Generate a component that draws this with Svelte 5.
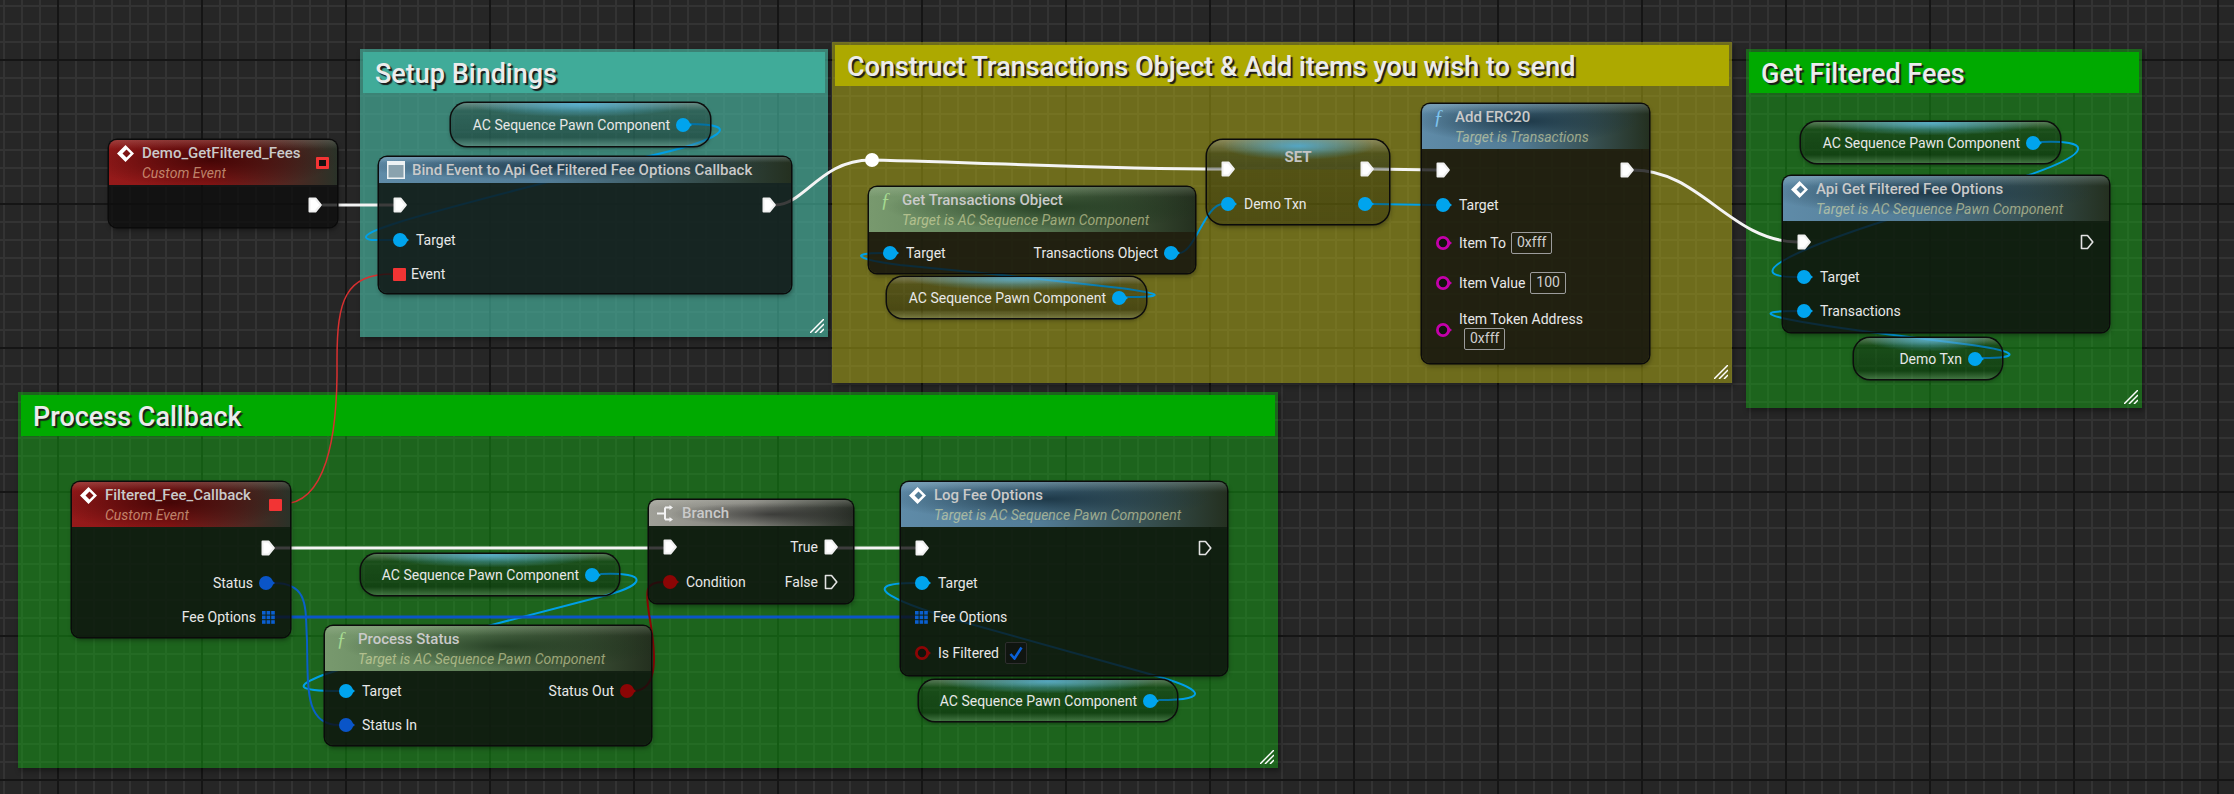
<script>
  const AC = 'AC Sequence Pawn Component';
  const TARGET_AC = 'Target is AC Sequence Pawn Component';

  const comments = [
    { x: 360, y: 49, w: 468, h: 288, tone: 'teal', title: 'Setup Bindings' },
    { x: 832, y: 42, w: 900, h: 341, tone: 'olive', title: 'Construct Transactions Object & Add items you wish to send' },
    { x: 1746, y: 49, w: 396, h: 359, tone: 'green', title: 'Get Filtered Fees' },
    { x: 18, y: 392, w: 1260, h: 376, tone: 'green', title: 'Process Callback' }
  ];

  const pills = [
    { x: 451, y: 103, w: 259, h: 43, label: AC },
    { x: 887, y: 277, w: 259, h: 41, label: AC },
    { x: 1801, y: 122, w: 259, h: 41, label: AC },
    { x: 1854, y: 338, w: 148, h: 41, label: 'Demo Txn' },
    { x: 361, y: 554, w: 258, h: 41, label: AC },
    { x: 919, y: 680, w: 258, h: 41, label: AC }
  ];

  // rows carry the y centre of the row on the canvas, see rowHeights()
  const nodes = [
    {
      x: 109, y: 140, w: 228, h: 87, hh: 45, tone: 'red', icon: 'diamond',
      title: 'Demo_GetFiltered_Fees', sub: 'Custom Event', tail: 'hollow',
      rows: [{ cy: 205, right: { pin: 'exec' } }]
    },
    {
      x: 379, y: 157, w: 412, h: 136, hh: 26, tone: 'blue', icon: 'bind',
      title: 'Bind Event to Api Get Filtered Fee Options Callback',
      rows: [
        { cy: 205, left: { pin: 'exec' }, right: { pin: 'exec' } },
        { cy: 240, left: { pin: 'obj', label: 'Target' } },
        { cy: 274, left: { pin: 'square', label: 'Event' } }
      ]
    },
    {
      x: 869, y: 187, w: 326, h: 86, hh: 45, tone: 'moss', icon: 'fn',
      title: 'Get Transactions Object', sub: TARGET_AC,
      rows: [{ cy: 253, left: { pin: 'obj', label: 'Target' }, right: { pin: 'obj', label: 'Transactions Object' } }]
    },
    {
      x: 1207, y: 140, w: 182, h: 84, hh: 0, tone: 'set', set: true,
      rows: [
        { cy: 169, left: { pin: 'exec' }, right: { pin: 'exec' } },
        { cy: 204, left: { pin: 'obj', label: 'Demo Txn' }, right: { pin: 'obj' } }
      ]
    },
    {
      x: 1422, y: 104, w: 227, h: 259, hh: 45, tone: 'blue', icon: 'fn',
      title: 'Add ERC20', sub: 'Target is Transactions',
      rows: [
        { cy: 170, left: { pin: 'exec' }, right: { pin: 'exec' } },
        { cy: 205, left: { pin: 'obj', label: 'Target' } },
        { cy: 243, left: { pin: 'str', label: 'Item To', value: '0xfff' } },
        { cy: 283, left: { pin: 'str', label: 'Item Value', value: '100' } },
        { cy: 330, left: { pin: 'str', label: 'Item Token Address', value: '0xfff', stacked: true } }
      ]
    },
    {
      x: 1783, y: 176, w: 326, h: 156, hh: 45, tone: 'blue', icon: 'diamond',
      title: 'Api Get Filtered Fee Options', sub: TARGET_AC,
      rows: [
        { cy: 242, left: { pin: 'exec' }, right: { pin: 'execOpen' } },
        { cy: 277, left: { pin: 'obj', label: 'Target' } },
        { cy: 311, left: { pin: 'obj', label: 'Transactions' } }
      ]
    },
    {
      x: 72, y: 482, w: 218, h: 155, hh: 45, tone: 'red', icon: 'diamond',
      title: 'Filtered_Fee_Callback', sub: 'Custom Event', tail: 'solid',
      rows: [
        { cy: 548, right: { pin: 'exec' } },
        { cy: 583, right: { pin: 'status', label: 'Status' } },
        { cy: 617, right: { pin: 'grid', label: 'Fee Options' } }
      ]
    },
    {
      x: 325, y: 626, w: 326, h: 119, hh: 45, tone: 'moss', icon: 'fn',
      title: 'Process Status', sub: TARGET_AC,
      rows: [
        { cy: 691, left: { pin: 'obj', label: 'Target' }, right: { pin: 'bool', label: 'Status Out' } },
        { cy: 725, left: { pin: 'status', label: 'Status In' } }
      ]
    },
    {
      x: 649, y: 500, w: 204, h: 103, hh: 26, tone: 'grey', icon: 'branch',
      title: 'Branch',
      rows: [
        { cy: 547, left: { pin: 'exec' }, right: { pin: 'exec', label: 'True' } },
        { cy: 582, left: { pin: 'bool', label: 'Condition' }, right: { pin: 'execOpen', label: 'False' } }
      ]
    },
    {
      x: 901, y: 482, w: 326, h: 193, hh: 45, tone: 'blue', icon: 'diamond',
      title: 'Log Fee Options', sub: TARGET_AC,
      rows: [
        { cy: 548, left: { pin: 'exec' }, right: { pin: 'execOpen' } },
        { cy: 583, left: { pin: 'obj', label: 'Target' } },
        { cy: 617, left: { pin: 'grid', label: 'Fee Options' } },
        { cy: 653, left: { pin: 'boolRing', label: 'Is Filtered', check: true } }
      ]
    }
  ];

  const wires = [
    { c: 'exec', d: 'M323 205H393' },
    { c: 'exec', d: 'M775 205C805 205 820 160 871 160C1000 163 1100 169 1224 169' },
    { c: 'exec', d: 'M1372 169L1437 170' },
    { c: 'exec', d: 'M1633 170C1700 170 1730 241 1797 242' },
    { c: 'exec', d: 'M275 548H663' },
    { c: 'exec', d: 'M838 548H915' },
    { c: 'obj', d: 'M689 124C745 124 722 140 645 157L536 185C440 210 340 235 372 240L393 240' },
    { c: 'obj', d: 'M1127 297C1165 297 1165 294 1120 288L1002 275L900 265C860 260 845 253 883 253' },
    { c: 'obj', d: 'M1179 253C1195 253 1205 204 1223 204' },
    { c: 'obj', d: 'M1372 204L1437 205' },
    { c: 'obj', d: 'M2041 142C2090 140 2095 152 2029 175L1887 220C1800 248 1735 277 1797 277' },
    { c: 'obj', d: 'M1983 358C2020 358 2020 352 1972 345L1870 332C1780 320 1740 311 1797 311' },
    { c: 'obj', d: 'M601 574C650 572 645 585 607 595L499 623L400 650L323 675C295 686 295 691 339 691' },
    { c: 'obj', d: 'M1159 700C1215 700 1200 688 1153 675L967 623C900 604 850 583 915 583' },
    { c: 'status', d: 'M274 583C310 583 305 610 307 640C308 690 305 725 339 725' },
    { c: 'array', d: 'M275 617H915' },
    { c: 'bool', d: 'M634 691C660 690 655 650 650 620C645 590 645 582 663 582' },
    { c: 'delegate', d: 'M282 504C325 504 338 440 337 360C337 300 345 274 393 274' }
  ];

  function rowHeights(node) {
    let top = node.y + node.hh;
    return node.rows.map((row) => {
      const h = 2 * (row.cy - top);
      top += h;
      return h;
    });
  }

  function place(item) {
    return `left:${item.x}px;top:${item.y}px;width:${item.w}px;height:${item.h}px`;
  }
</script>

{#snippet pin(kind)}
  {#if kind === 'exec' || kind === 'execOpen'}
    <svg class="pin" width="14" height="16" viewBox="0 0 14 16">
      <path
        d="M1.5 1.5H7.5L12.8 8L7.5 14.5H1.5Z"
        fill={kind === 'exec' ? '#fff' : 'none'}
        stroke={kind === 'exec' ? '#f0f0f0' : '#e2e2e2'}
        stroke-width={kind === 'exec' ? 2 : 1.6}
        stroke-linejoin="round"
      />
    </svg>
  {:else if kind === 'square'}
    <svg class="pin tight" width="13" height="13" viewBox="0 0 13 13"><rect width="13" height="13" rx="1" fill="#f23434" /></svg>
  {:else if kind === 'grid'}
    <svg class="pin tight" width="13" height="13" viewBox="0 0 13 13" fill="#0a5fd0">
      {#each [0, 4.6, 9.2] as gy}
        {#each [0, 4.6, 9.2] as gx}
          <rect x={gx} y={gy} width="3.6" height="3.6" />
        {/each}
      {/each}
    </svg>
  {:else if kind === 'str' || kind === 'boolRing'}
    <svg class="pin" width="16" height="16" viewBox="0 0 16 16">
      <circle cx="7" cy="8" r="5.6" fill="#10140c" stroke={kind === 'str' ? '#c400aa' : '#8c0505'} stroke-width="2.8" />
      <path d="M13 5.5L16 8L13 10.5Z" fill={kind === 'str' ? '#c400aa' : '#8c0505'} />
    </svg>
  {:else}
    <svg class="pin" width="16" height="16" viewBox="0 0 16 16">
      <circle cx="7" cy="8" r="7" fill={kind === 'obj' ? '#00a4ee' : kind === 'status' ? '#0a55c8' : '#8c0505'} />
      <path d="M13 5.5L16 8L13 10.5Z" fill={kind === 'obj' ? '#00a4ee' : kind === 'status' ? '#0a55c8' : '#8c0505'} />
    </svg>
  {/if}
{/snippet}

{#snippet side(s, right)}
  {#if s}
    <div class="side" class:right>
      {#if right}
        {#if s.label}<span>{s.label}</span>{/if}
        {@render pin(s.pin)}
      {:else}
        {@render pin(s.pin)}
        {#if s.stacked}
          <div class="stack">
            <span>{s.label}</span>
            <span class="value">{s.value}</span>
          </div>
        {:else}
          {#if s.label}<span>{s.label}</span>{/if}
          {#if s.value}<span class="value">{s.value}</span>{/if}
          {#if s.check}
            <span class="check">
              <svg width="14" height="14" viewBox="0 0 14 14"><path d="M1.5 8L5.5 12.5L12.5 1.5" fill="none" stroke="#0a60d8" stroke-width="2.6" /></svg>
            </span>
          {/if}
        {/if}
      {/if}
    </div>
  {/if}
{/snippet}

{#snippet icon(name, tone)}
  <span class="icon">
    {#if name === 'diamond'}
      <svg width="17" height="17" viewBox="0 0 17 17">
        <path fill="#fff" fill-rule="evenodd" d="M8.5 0L17 8.5L8.5 17L0 8.5ZM9.5 4.5L5.5 8.5L9.5 12.5L13.5 8.5Z" />
      </svg>
    {:else if name === 'fn'}
      <span class="fn" class:moss={tone === 'moss'}>ƒ</span>
    {:else if name === 'bind'}
      <svg width="18" height="18" viewBox="0 0 18 18">
        <rect width="18" height="18" fill="#eef2f4" />
        <rect x="1.5" y="4" width="15" height="12.5" fill="#8aa2ae" />
      </svg>
    {:else if name === 'branch'}
      <svg width="17" height="19" viewBox="0 0 17 19" fill="none" stroke="#f2f2f2" stroke-width="2">
        <path d="M0 9.5H8M8 3.5V15.5M8 3.5H13M8 15.5H13" />
        <path d="M12.5 1L16 3.5L12.5 6Z M12.5 13L16 15.5L12.5 18Z" fill="#f2f2f2" stroke="none" />
      </svg>
    {/if}
  </span>
{/snippet}

<main class="canvas">
  {#each comments as c}
    <section class="comment {c.tone}" style={place(c)}>
      <h2>{c.title}</h2>
      <svg class="handle" width="14" height="14" viewBox="0 0 14 14" stroke="#fff" stroke-width="1.5">
        <path d="M0 14L14 0M5 14L14 5M10 14L14 10" />
      </svg>
    </section>
  {/each}

  <svg class="wires" width="2234" height="794" viewBox="0 0 2234 794" fill="none">
    {#each wires as w}
      <path class={w.c} d={w.d} />
    {/each}
    <circle cx="872" cy="160" r="7" fill="#fff" />
  </svg>

  {#each pills as p}
    <div class="pill" style={place(p)}>
      <span>{p.label}</span>
      {@render pin('obj')}
    </div>
  {/each}

  {#each nodes as n}
    {@const heights = rowHeights(n)}
    <div class="node {n.tone}" class:set={n.set} style={place(n)}>
      {#if n.set}
        <div class="set-title">SET</div>
      {:else}
        <header style="height:{n.hh}px">
          {@render icon(n.icon, n.tone)}
          <div class="titles">
            <strong>{n.title}</strong>
            {#if n.sub}<em>{n.sub}</em>{/if}
          </div>
          {#if n.tail}
            <span class="tail {n.tail}"></span>
          {/if}
        </header>
      {/if}
      <div class="rows">
        {#each n.rows as row, i}
          <div class="row" style="height:{heights[i]}px">
            {@render side(row.left, false)}
            {@render side(row.right, true)}
          </div>
        {/each}
      </div>
    </div>
  {/each}
</main>

<style>
  :global(body) {
    margin: 0;
    background: #262626;
  }

  .canvas {
    position: relative;
    width: 2234px;
    height: 794px;
    overflow: hidden;
    font-family: Roboto, 'Liberation Sans', sans-serif;
    font-size: 14px;
    color: #e8e8e8;
    background-color: #262626;
    background-image:
      linear-gradient(90deg, #151515 2px, transparent 2px),
      linear-gradient(#151515 2px, transparent 2px),
      linear-gradient(90deg, #333 2px, transparent 2px),
      linear-gradient(#333 2px, transparent 2px);
    background-size: 144px 144px, 144px 144px, 18px 18px, 18px 18px;
    background-position: 57px 0, 0 59px, 3px 0, 0 5px;
  }

  /* comment boxes */
  .comment {
    position: absolute;
    box-sizing: border-box;
    padding: 3px;
    box-shadow: 2px 3px 5px rgba(0, 0, 0, 0.35);
  }

  .comment h2 {
    margin: 0;
    height: 41px;
    line-height: 45px;
    padding-left: 12px;
    font-size: 27px;
    font-weight: 500;
    color: #ececec;
    text-shadow: 2px 2px 1px #1a1a1a;
    white-space: nowrap;
  }

  .comment.green {
    background: rgba(20, 170, 20, 0.47);
  }

  .comment.green h2 {
    background: #00aa00;
  }

  .comment.teal {
    background: rgba(70, 175, 155, 0.68);
  }

  .comment.teal h2 {
    background: #40ab99;
  }

  .comment.olive {
    background: rgba(170, 165, 20, 0.55);
  }

  .comment.olive h2 {
    background: #ada900;
  }

  .handle {
    position: absolute;
    right: 4px;
    bottom: 4px;
  }

  /* wires */
  .wires {
    position: absolute;
    left: 0;
    top: 0;
  }

  .wires path {
    stroke-linecap: round;
  }

  .exec {
    stroke: #f4f4f4;
    stroke-width: 3;
  }

  .obj {
    stroke: #00a0e8;
    stroke-width: 2;
  }

  .status {
    stroke: #0a60c8;
    stroke-width: 2;
  }

  .array {
    stroke: #0a55c8;
    stroke-width: 3;
  }

  .bool {
    stroke: #8c0505;
    stroke-width: 2;
  }

  .delegate {
    stroke: #d83030;
    stroke-width: 1.5;
  }

  /* pure getter pills */
  .pill {
    position: absolute;
    box-sizing: border-box;
    display: flex;
    align-items: center;
    justify-content: flex-end;
    gap: 6px;
    padding-right: 18px;
    border-radius: 16px;
    white-space: nowrap;
    background:
      radial-gradient(ellipse 42% 30% at 50% 3%, rgba(90, 185, 225, 0.8), transparent),
      linear-gradient(rgba(150, 150, 150, 0.5), rgba(20, 20, 20, 0.28) 18%, rgba(0, 0, 0, 0.32) 80%, rgba(140, 150, 140, 0.32));
    box-shadow: 0 0 0 1.5px #0d0d0d, 0 2px 4px rgba(0, 0, 0, 0.4);
  }

  /* nodes */
  .node {
    position: absolute;
    box-sizing: border-box;
    border-radius: 8px;
    overflow: hidden;
    background: rgba(14, 14, 14, 0.8);
    box-shadow: 0 0 0 1.5px #0b0b0b, 1px 3px 5px rgba(0, 0, 0, 0.4);
  }

  .node.set {
    border-radius: 16px;
    background:
      radial-gradient(ellipse 42% 14px at 50% 6px, rgba(80, 175, 220, 0.85), transparent),
      linear-gradient(rgba(160, 160, 140, 0.55), rgba(40, 50, 30, 0.4) 16%, rgba(30, 40, 30, 0.45) 34%, rgba(15, 15, 0, 0.28) 36%, rgba(15, 15, 0, 0.32));
  }

  .set-title {
    position: absolute;
    left: 0;
    right: 0;
    top: 7px;
    text-align: center;
    font-size: 15px;
    font-weight: 700;
    color: #c4c4c4;
    line-height: 20px;
  }

  header {
    display: flex;
    position: relative;
    box-sizing: border-box;
    white-space: nowrap;
  }

  .icon {
    flex: 0 0 33px;
    height: 26px;
    display: flex;
    align-items: center;
    justify-content: center;
  }

  .fn {
    font-family: 'Liberation Serif', serif;
    font-style: italic;
    font-size: 20px;
    color: #7ec4ee;
  }

  .fn.moss {
    color: #a4d890;
  }

  .titles {
    display: flex;
    flex-direction: column;
    padding-top: 3px;
  }

  .titles strong {
    font-size: 15px;
    font-weight: 500;
    color: #cacaca;
    line-height: 20px;
  }

  .titles em {
    color: rgba(225, 225, 170, 0.6);
    line-height: 21px;
  }

  .red .titles em {
    color: rgba(250, 210, 170, 0.6);
  }

  .tail {
    position: absolute;
    top: 17px;
    right: 8px;
    width: 13px;
    height: 12px;
    box-sizing: border-box;
    border-radius: 1px;
    background: #f23434;
  }

  .tail.hollow {
    border: 3px solid #f23434;
    background: #111;
  }

  .red header {
    background:
      linear-gradient(rgba(190, 190, 180, 0.22), transparent 20%),
      radial-gradient(ellipse 55% 65% at 45% 45%, rgba(45, 0, 0, 0.75), transparent),
      linear-gradient(90deg, #951a1a 0%, #8c1616 45%, #2a3228 100%);
  }

  .blue header {
    background:
      linear-gradient(rgba(200, 220, 225, 0.25), transparent 22%),
      radial-gradient(ellipse 50% 50% at 45% 38%, rgba(18, 42, 56, 0.8), transparent),
      linear-gradient(90deg, #5f8ba8 0%, #527c96 42%, #243020 100%);
  }

  .moss header {
    background:
      linear-gradient(rgba(210, 225, 200, 0.2), transparent 22%),
      radial-gradient(ellipse 50% 50% at 55% 45%, rgba(25, 50, 25, 0.75), transparent),
      linear-gradient(90deg, #78996e 0%, #5f8058 45%, #24301f 100%);
  }

  .grey header {
    background:
      linear-gradient(rgba(220, 220, 210, 0.25), transparent 30%),
      radial-gradient(ellipse 50% 45% at 60% 55%, rgba(20, 20, 20, 0.55), transparent),
      linear-gradient(90deg, #a0a098 0%, #80807a 50%, #2a3028 100%);
  }

  .rows {
    display: flex;
    flex-direction: column;
  }

  .row {
    display: flex;
    align-items: center;
    justify-content: space-between;
    padding: 0 15px 0 14px;
    white-space: nowrap;
  }

  .side {
    display: flex;
    align-items: center;
    gap: 7px;
  }

  .side.right {
    margin-left: auto;
    gap: 6px;
  }

  .pin {
    flex: none;
    display: block;
  }

  .pin.tight {
    margin-right: -2px;
  }

  .side.right .pin.tight {
    margin-right: 0;
  }

  .stack {
    display: flex;
    flex-direction: column;
    align-items: flex-start;
    gap: 1px;
  }

  .stack .value {
    margin-left: 5px;
  }

  .value {
    box-sizing: border-box;
    height: 22px;
    line-height: 19px;
    padding: 0 5px;
    margin-left: -2px;
    border: 1.5px solid #9c9c9c;
    border-radius: 2px;
    color: #cfcfcf;
  }

  .check {
    display: flex;
    align-items: center;
    justify-content: center;
    width: 20px;
    height: 20px;
    margin-left: -1px;
    border: 1px solid #2e2e2e;
    border-radius: 2px;
    background: #101510;
  }
</style>
